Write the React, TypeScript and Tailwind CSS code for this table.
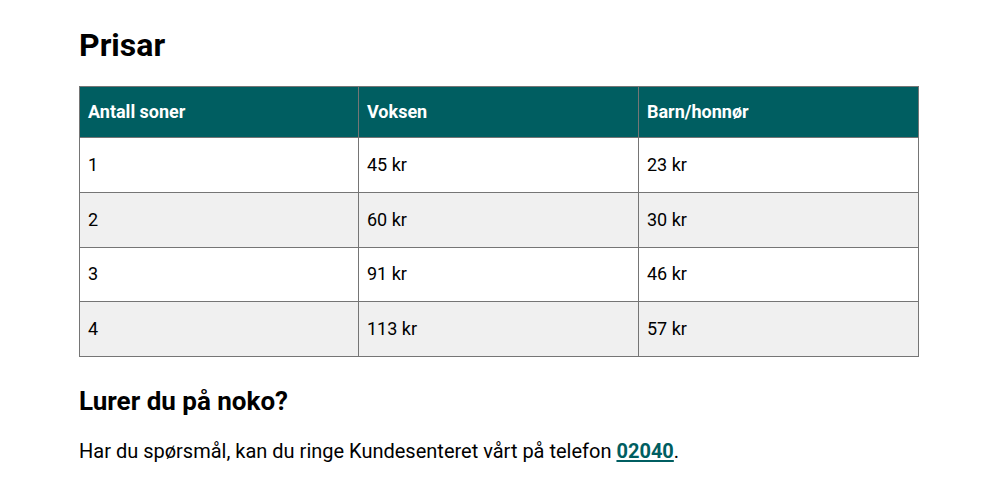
export default function App() {
  const rows = [
    ["1", "45 kr", "23 kr"],
    ["2", "60 kr", "30 kr"],
    ["3", "91 kr", "46 kr"],
    ["4", "113 kr", "57 kr"],
  ];
  return (
    <div className="min-h-[488px] bg-white text-black" style={{ fontFamily: "Roboto, sans-serif" }}>
      <div className="ml-[79px] w-[840px] pt-[27px]">
        <h1 className="text-[32px] font-bold leading-[36px]">Prisar</h1>
        <table className="mt-[23px] w-full border-collapse text-[18px]">
          <thead>
            <tr className="bg-[#005e61] text-white">
              <th className="w-[279px] border border-[#757575] px-2 py-[13px] text-left font-bold leading-6">Antall soner</th>
              <th className="w-[280px] border border-[#757575] px-2 py-[13px] text-left font-bold leading-6">Voksen</th>
              <th className="border border-[#757575] px-2 py-[13px] text-left font-bold leading-6">Barn/honnør</th>
            </tr>
          </thead>
          <tbody>
            {rows.map((r, i) => (
              <tr key={i} className={i % 2 === 1 ? "bg-[#f0f0f0]" : "bg-white"}>
                {r.map((c, j) => (
                  <td key={j} className="border border-[#757575] px-2 py-[14.875px] leading-6">{c}</td>
                ))}
              </tr>
            ))}
          </tbody>
        </table>
        <h2 className="mt-[28px] text-[26px] font-bold leading-[32px]">Lurer du på noko?</h2>
        <p className="mt-[20px] text-[20px] leading-[28px]">
          Har du spørsmål, kan du ringe Kundesenteret vårt på telefon{" "}
          <a href="#" className="font-bold text-[#005e61] underline underline-offset-2">02040</a>.
        </p>
      </div>
    </div>
  );
}
